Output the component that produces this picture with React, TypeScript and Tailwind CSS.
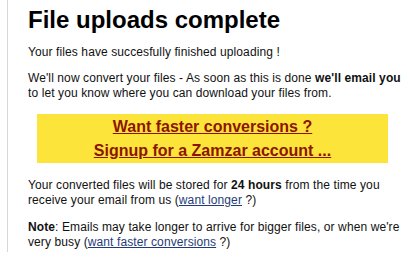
export default function App() {
  return (
    <div className="w-[413px] h-[259px] bg-white overflow-hidden relative" style={{ fontFamily: '"Liberation Sans", Arial, sans-serif' }}>
      <div className="absolute left-[7px] top-0 w-px h-[252px] bg-[#d8d8d8]" />
      <div className="pl-[28px] pr-[10px] pt-[6px] text-[12px] leading-[15px] text-[#111] tracking-[0.1px]">
        <h1 className="text-[24px] leading-[28px] font-bold text-black tracking-normal">File uploads complete</h1>
        <p className="mt-[11px]">Your files have succesfully finished uploading !</p>
        <p className="mt-[11px] w-[374px]">
          We'll now convert your files - As soon as this is done <b>we'll email you</b> to let you know where you can download your files from.
        </p>
        <div className="mt-[13px] ml-[9px] w-[351px] h-[49px] bg-[#fde43a] flex flex-col items-center justify-center gap-[4px] text-[16px] leading-[20px] font-bold tracking-normal">
          <a className="text-[#8b1500] underline">Want faster conversions ?</a>
          <a className="text-[#8b1500] underline">Signup for a Zamzar account ...</a>
        </div>
        <p className="mt-[15px]">
          Your converted files will be stored for <b>24 hours</b> from the time you receive your email from us (<a className="text-[#1f3c78] underline">want longer</a> ?)
        </p>
        <p className="mt-[12px]">
          <b>Note</b>: Emails may take longer to arrive for bigger files, or when we're very busy (<a className="text-[#1f3c78] underline">want faster conversions</a> ?)
        </p>
      </div>
    </div>
  );
}
